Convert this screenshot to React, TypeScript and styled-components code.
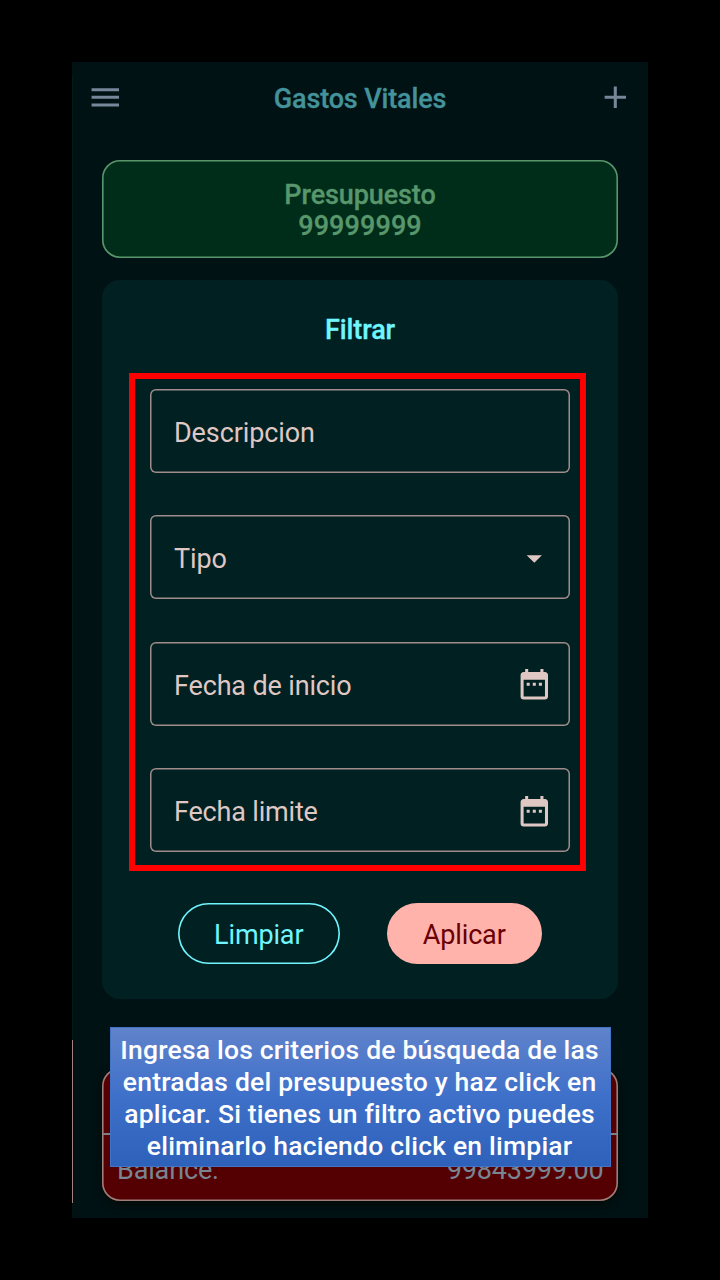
import React from "react";
import styled, { createGlobalStyle } from "styled-components";

const GlobalStyle = createGlobalStyle`
  * { box-sizing: border-box; }
  body { margin: 0; background: #000; font-family: Roboto, "Liberation Sans", sans-serif; }
`;

const Stage = styled.main`
  width: 720px;
  height: 1280px;
  padding: 62px 72px;
  background: #000;
  overflow: hidden;
`;

const Phone = styled.div`
  position: relative;
  width: 576px;
  height: 1156px;
  padding: 0 30px;
  background: #001214;
  display: flex;
  flex-direction: column;
`;

const AppBar = styled.header`
  display: flex;
  align-items: center;
  justify-content: space-between;
  height: 70px;
  margin: 0 -15.3px;
  color: #77879a;
`;

const Title = styled.h1`
  margin: 4px 0 0;
  font-size: 27px;
  font-weight: 500;
  line-height: 32px;
  letter-spacing: -0.15px;
  color: #44939b;
  -webkit-text-stroke: 0.3px currentColor;
`;

const Icon = styled.svg`
  display: block;
  flex: none;
  width: 36.6px;
  height: 36.6px;
  fill: currentColor;
`;

const Budget = styled.section`
  display: flex;
  flex-direction: column;
  align-items: center;
  height: 97.5px;
  margin-top: 28.3px;
  padding: 20px 0 0;
  border-radius: 18px;
  background: #002d19;
  box-shadow: inset 0 0 0 1.6px #58966b;
  color: #58966b;
  font-size: 27px;
  font-weight: 500;
  line-height: 31px;
  -webkit-text-stroke: 0.3px currentColor;
`;

const FilterCard = styled.section`
  display: flex;
  flex-direction: column;
  align-items: center;
  height: 719px;
  margin-top: 22.2px;
  padding: 34px 27px 0;
  border-radius: 18px;
  background: #012021;
`;

const FilterTitle = styled.h2`
  margin: 0;
  font-size: 27px;
  font-weight: 500;
  line-height: 32px;
  letter-spacing: -0.1px;
  color: #70f6ff;
  -webkit-text-stroke: 0.3px currentColor;
`;

const Highlight = styled.div`
  display: flex;
  flex-direction: column;
  gap: 42.5px;
  width: 457px;
  height: 498px;
  margin: 27px 0 0 -5px;
  padding: 10px 10px 0 15px;
  border: 6px solid #ff0000;
`;

const Field = styled.div`
  display: flex;
  align-items: center;
  justify-content: space-between;
  flex: none;
  width: 420px;
  height: 84px;
  padding: 4px 17.3px 0 24px;
  border-radius: 6px;
  box-shadow: inset 0 0 0 1.5px #a08c8a;
  color: #dfc7c4;
  font-size: 27px;
  line-height: 32px;

  svg { margin-top: -3px; }
`;

const Label = styled.span<{ $spacing?: number }>`
  letter-spacing: ${(p) => p.$spacing ?? 0}px;
`;

const Actions = styled.div`
  display: flex;
  gap: 47px;
  margin-top: 32px;
`;

const Pill = styled.button<{ $filled?: boolean }>`
  width: ${(p) => (p.$filled ? 155.5 : 161.5)}px;
  height: 61px;
  padding: 3px 0 0;
  border: 0;
  border-radius: 31px;
  font: 400 27px/32px Roboto, sans-serif;
  letter-spacing: -0.15px;
  background: ${(p) => (p.$filled ? "#ffb3ab" : "transparent")};
  color: ${(p) => (p.$filled ? "#680005" : "#70f6ff")};
  box-shadow: ${(p) => (p.$filled ? "none" : "inset 0 0 0 1.6px #70f6ff")};
`;

const Summary = styled.section`
  height: 133px;
  margin-top: 69px;
  border-radius: 18px;
  background: #540003;
  box-shadow: inset 0 0 0 1.6px #9c7f7a, 0 4px 9px rgba(0, 8, 0, 0.65);
  color: #788592;
`;

const SummaryHead = styled.div`
  height: 67px;
  margin: 0 1px;
  border-bottom: 2px solid #7d7f8a;
`;

const SummaryRow = styled.div`
  display: flex;
  justify-content: space-between;
  padding: 19.5px 14.5px 0 15px;
  font-size: 27px;
  line-height: 32px;
`;

const Callout = styled.aside`
  position: absolute;
  left: 38px;
  top: 965px;
  width: 501px;
  height: 140px;
  padding: 6px 2px 0 0;
  display: flex;
  flex-direction: column;
  align-items: center;
  border: 1px solid #4472c4;
  background: linear-gradient(#6083cb, #3e70ca 50%, #2e61ba);
  color: #fff;
  font-size: 26.5px;
  font-weight: 500;
  line-height: 32px;
`;

const CalloutLine = styled.span<{ $spacing: number }>`
  white-space: nowrap;
  letter-spacing: ${(p) => p.$spacing}px;
  margin-right: ${(p) => -p.$spacing}px;
`;

const EdgeLine = styled.i<{ $top: number; $height: number; $color: string }>`
  position: absolute;
  left: 0;
  top: ${(p) => p.$top}px;
  width: 1px;
  height: ${(p) => p.$height}px;
  background: ${(p) => p.$color};
`;

const MenuIcon = () => (
  <Icon viewBox="0 0 24 24"><path d="M3 18h18v-2H3v2zm0-5h18v-2H3v2zm0-7v2h18V6H3z" /></Icon>
);
const AddIcon = () => (
  <Icon viewBox="0 0 24 24"><path d="M19 13h-6v6h-2v-6H5v-2h6V5h2v6h6v2z" /></Icon>
);
const DropIcon = () => (
  <Icon viewBox="0 0 24 24"><path d="M7 10l5 5 5-5z" /></Icon>
);
const CalendarIcon = () => (
  <Icon viewBox="0 0 24 24">
    <path d="M9 11H7v2h2v-2zm4 0h-2v2h2v-2zm4 0h-2v2h2v-2zm2-7h-1V2h-2v2H8V2H6v2H5c-1.11 0-1.99.9-1.99 2L3 20a2 2 0 0 0 2 2h14c1.1 0 2-.9 2-2V6c0-1.1-.9-2-2-2zm0 16H5V9h14v11z" />
  </Icon>
);

export default function App() {
  return (
    <Stage>
      <GlobalStyle />
      <Phone>
        <EdgeLine $top={14} $height={964} $color="#021c1e" />
        <EdgeLine $top={978} $height={163} $color="#a58180" />
        <AppBar>
          <MenuIcon />
          <Title>Gastos Vitales</Title>
          <AddIcon />
        </AppBar>
        <Budget>
          <Label $spacing={-0.1}>Presupuesto</Label>
          <Label $spacing={0.1}>99999999</Label>
        </Budget>
        <FilterCard>
          <FilterTitle>Filtrar</FilterTitle>
          <Highlight>
            <Field><Label $spacing={-0.1}>Descripcion</Label></Field>
            <Field><Label $spacing={-0.1}>Tipo</Label><DropIcon /></Field>
            <Field><Label $spacing={-0.15}>Fecha de inicio</Label><CalendarIcon /></Field>
            <Field><Label $spacing={-0.18}>Fecha limite</Label><CalendarIcon /></Field>
          </Highlight>
          <Actions>
            <Pill>Limpiar</Pill>
            <Pill $filled>Aplicar</Pill>
          </Actions>
        </FilterCard>
        <Summary>
          <SummaryHead />
          <SummaryRow>
            <Label $spacing={-0.15}>Balance:</Label>
            <Label $spacing={-0.2}>99843999.00</Label>
          </SummaryRow>
        </Summary>
        <Callout>
          <CalloutLine $spacing={0.2}>Ingresa los criterios de búsqueda de las</CalloutLine>
          <CalloutLine $spacing={0.19}>entradas del presupuesto y haz click en</CalloutLine>
          <CalloutLine $spacing={0.16}>aplicar. Si tienes un filtro activo puedes</CalloutLine>
          <CalloutLine $spacing={0.2}>eliminarlo haciendo click en limpiar</CalloutLine>
        </Callout>
      </Phone>
    </Stage>
  );
}
